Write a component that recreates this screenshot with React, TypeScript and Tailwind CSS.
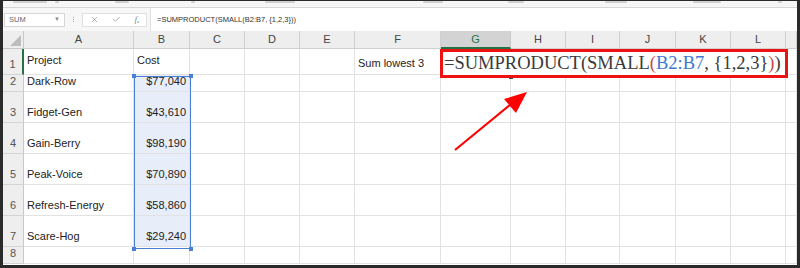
import { Check, X } from "lucide-react";

const cols = ["A", "B", "C", "D", "E", "F", "G", "H", "I", "J", "K", "L", ""];

const rows: { n: number; project: string; cost: string }[] = [
  { n: 2, project: "Dark-Row", cost: "$77,040" },
  { n: 3, project: "Fidget-Gen", cost: "$43,610" },
  { n: 4, project: "Gain-Berry", cost: "$98,190" },
  { n: 5, project: "Peak-Voice", cost: "$70,890" },
  { n: 6, project: "Refresh-Energy", cost: "$58,860" },
  { n: 7, project: "Scare-Hog", cost: "$29,240" },
];

// the ribbon group labels are cut off at the top, only smudges remain
const ribbon = [
  { x: 10, w: 34 },
  { x: 52, w: 4 },
  { x: 112, w: 14 },
  { x: 188, w: 4 },
  { x: 262, w: 30 },
  { x: 420, w: 20 },
  { x: 505, w: 16 },
  { x: 602, w: 22 },
  { x: 690, w: 28 },
  { x: 775, w: 4 },
];

// plain grid cell, gridlines on right + bottom
function Cell({ children, className = "" }: { children?: React.ReactNode; className?: string }) {
  return (
    <div className={`flex border-r border-b border-[#e2e2e2] overflow-hidden whitespace-nowrap ${className}`}>
      {children}
    </div>
  );
}

function RowHead({ n, active }: { n: number; active?: boolean }) {
  return (
    <div
      className={`flex items-end justify-center pb-[3px] bg-[#eeeeee] border-b border-[#d4d4d4] text-[11px] leading-[13px] text-[#555] ${
        active ? "border-r-2 border-r-[#217346]" : "border-r border-r-[#c8c8c8]"
      }`}
    >
      {n}
    </div>
  );
}

export default function App() {
  return (
    <div className="relative w-[800px] h-[268px] bg-[#2a2a2a] pt-px px-[3px] pb-[3px] font-['Liberation_Sans',Arial,sans-serif]">
      <div className="flex flex-col h-full bg-white">
        {/* ribbon remnants */}
        <div className="relative h-[7px] overflow-hidden bg-[#f6f6f6] border-b border-[#d6d6d6]">
          {ribbon.map((r) => (
            <span
              key={r.x}
              className="absolute top-0 h-[2px] rounded-sm bg-[#cfcfcf]"
              style={{ left: r.x, width: r.w }}
            />
          ))}
        </div>

        {/* formula bar */}
        <div className="flex items-center h-[23px] bg-[#f7f7f7] pl-px">
          <div className="flex items-center justify-between w-[61px] h-[14px] bg-white border border-[#d6d6d6] px-[4px] text-[7.5px] text-[#666]">
            <span>SUM</span>
            <span className="text-[6px] text-[#888]">▼</span>
          </div>
          <div className="flex flex-col gap-px ml-[8px] mr-[8px]">
            <span className="w-px h-px bg-[#aaa]" />
            <span className="w-px h-px bg-[#aaa]" />
            <span className="w-px h-px bg-[#aaa]" />
          </div>
          <div className="flex items-center justify-around w-[65px] h-[14px] bg-white border border-[#e0e0e0]">
            <X size={9} strokeWidth={1.4} color="#777" />
            <Check size={9} strokeWidth={1.6} color="#777" />
            <span className="font-['Liberation_Serif',serif] italic text-[8px] text-[#777]">
              f<sub className="text-[5px]">x</sub>
            </span>
          </div>
          <div className="flex items-center flex-1 h-[23px] ml-[3px] bg-white border-l border-[#e0e0e0] pl-[6px] text-[7.5px] text-[#333]">
            =SUMPRODUCT(SMALL(B2:B7, {"{1,2,3}"}))
          </div>
        </div>

        {/* sheet grid */}
        <div className="grid flex-1 grid-cols-[21px_110px_56px_55px_55px_55px_86px_70px_55px_54px_56px_55px_55px_1fr] grid-rows-[18px_26px_17px_31px_31px_31px_31px_31px_17px] text-[11px] leading-[13px] text-[#222]">
          {/* header row */}
          <div className="relative bg-[#eeeeee] border-r border-b border-[#c8c8c8]">
            <div className="absolute right-[2px] bottom-[2px] w-0 h-0 border-l-[11px] border-l-transparent border-b-[11px] border-b-[#bdbdbd]" />
          </div>
          {cols.map((c) =>
            c === "G" ? (
              <div
                key={c}
                className="flex items-center justify-center bg-[#d3d3d3] border-r border-[#c8c8c8] border-b-2 border-b-[#217346] text-[#217346]"
              >
                {c}
              </div>
            ) : (
              <div
                key={c || "M"}
                className="flex items-center justify-center bg-[#eeeeee] border-r border-b border-[#cfcfcf] text-[#444]"
              >
                {c}
              </div>
            )
          )}

          {/* row 1 */}
          <RowHead n={1} active />
          <Cell className="items-center pb-[2px] pl-[3px]">Project</Cell>
          <Cell className="items-center pb-[2px] pl-[3px]">Cost</Cell>
          <Cell />
          <Cell />
          <Cell />
          <Cell className="items-end pb-[4px] pl-[3px]">Sum lowest 3</Cell>
          <Cell />
          <Cell />
          <Cell />
          <Cell />
          <Cell />
          <Cell />
          <Cell />

          {/* rows 2-7 */}
          {rows.map((r) => (
            <div key={r.n} className="contents">
              <RowHead n={r.n} />
              <Cell className="items-end pb-[3px] pl-[3px]">{r.project}</Cell>
              <Cell className="items-end justify-end pb-[3px] pr-[3px] bg-[#e8eef9]">{r.cost}</Cell>
              {cols.slice(2).map((c) => (
                <Cell key={c || "M"} />
              ))}
            </div>
          ))}

          {/* row 8 */}
          <RowHead n={8} />
          {cols.map((c) => (
            <Cell key={c || "M"} />
          ))}
        </div>
      </div>

      {/* B2:B7 reference highlight */}
      <div className="absolute left-[134px] top-[76px] w-[57px] h-[173px] border-[1.5px] border-[#4a7fd6] pointer-events-none">
        <span className="absolute -left-[3px] -top-[3px] w-[4px] h-[4px] bg-[#4a7fd6]" />
        <span className="absolute -right-[3px] -top-[3px] w-[4px] h-[4px] bg-[#4a7fd6]" />
        <span className="absolute -left-[3px] -bottom-[3px] w-[4px] h-[4px] bg-[#4a7fd6]" />
        <span className="absolute -right-[3px] -bottom-[3px] w-[4px] h-[4px] bg-[#4a7fd6]" />
      </div>

      {/* G1 fill handle */}
      <span className="absolute left-[509px] top-[75px] w-[4px] h-[4px] bg-[#1e5c3a]" />

      {/* annotation: red box with the formula */}
      <div className="absolute left-[440px] top-[49px] w-[348px] h-[29px] border-[3px] border-[#ee1111] bg-white flex items-center pl-[1px] font-['Liberation_Serif','Times_New_Roman',serif] text-[18.5px] leading-none text-[#3a3a3a] whitespace-nowrap">
        <span>=SUMPRODUCT(SMALL</span>
        <span className="text-[#c94a4a]">(</span>
        <span className="text-[#3f78d2]">B2:B7</span>
        <span>, {"{1,2,3}"}</span>
        <span className="text-[#c94a4a]">)</span>
        <span>)</span>
      </div>

      {/* annotation: arrow */}
      <svg className="absolute left-0 top-0 pointer-events-none" width="800" height="268">
        <line x1="455" y1="150" x2="511" y2="104" stroke="#ff0000" strokeWidth="2.2" />
        <polygon points="527,92 516,113 504,99" fill="#ff0000" />
      </svg>
    </div>
  );
}
